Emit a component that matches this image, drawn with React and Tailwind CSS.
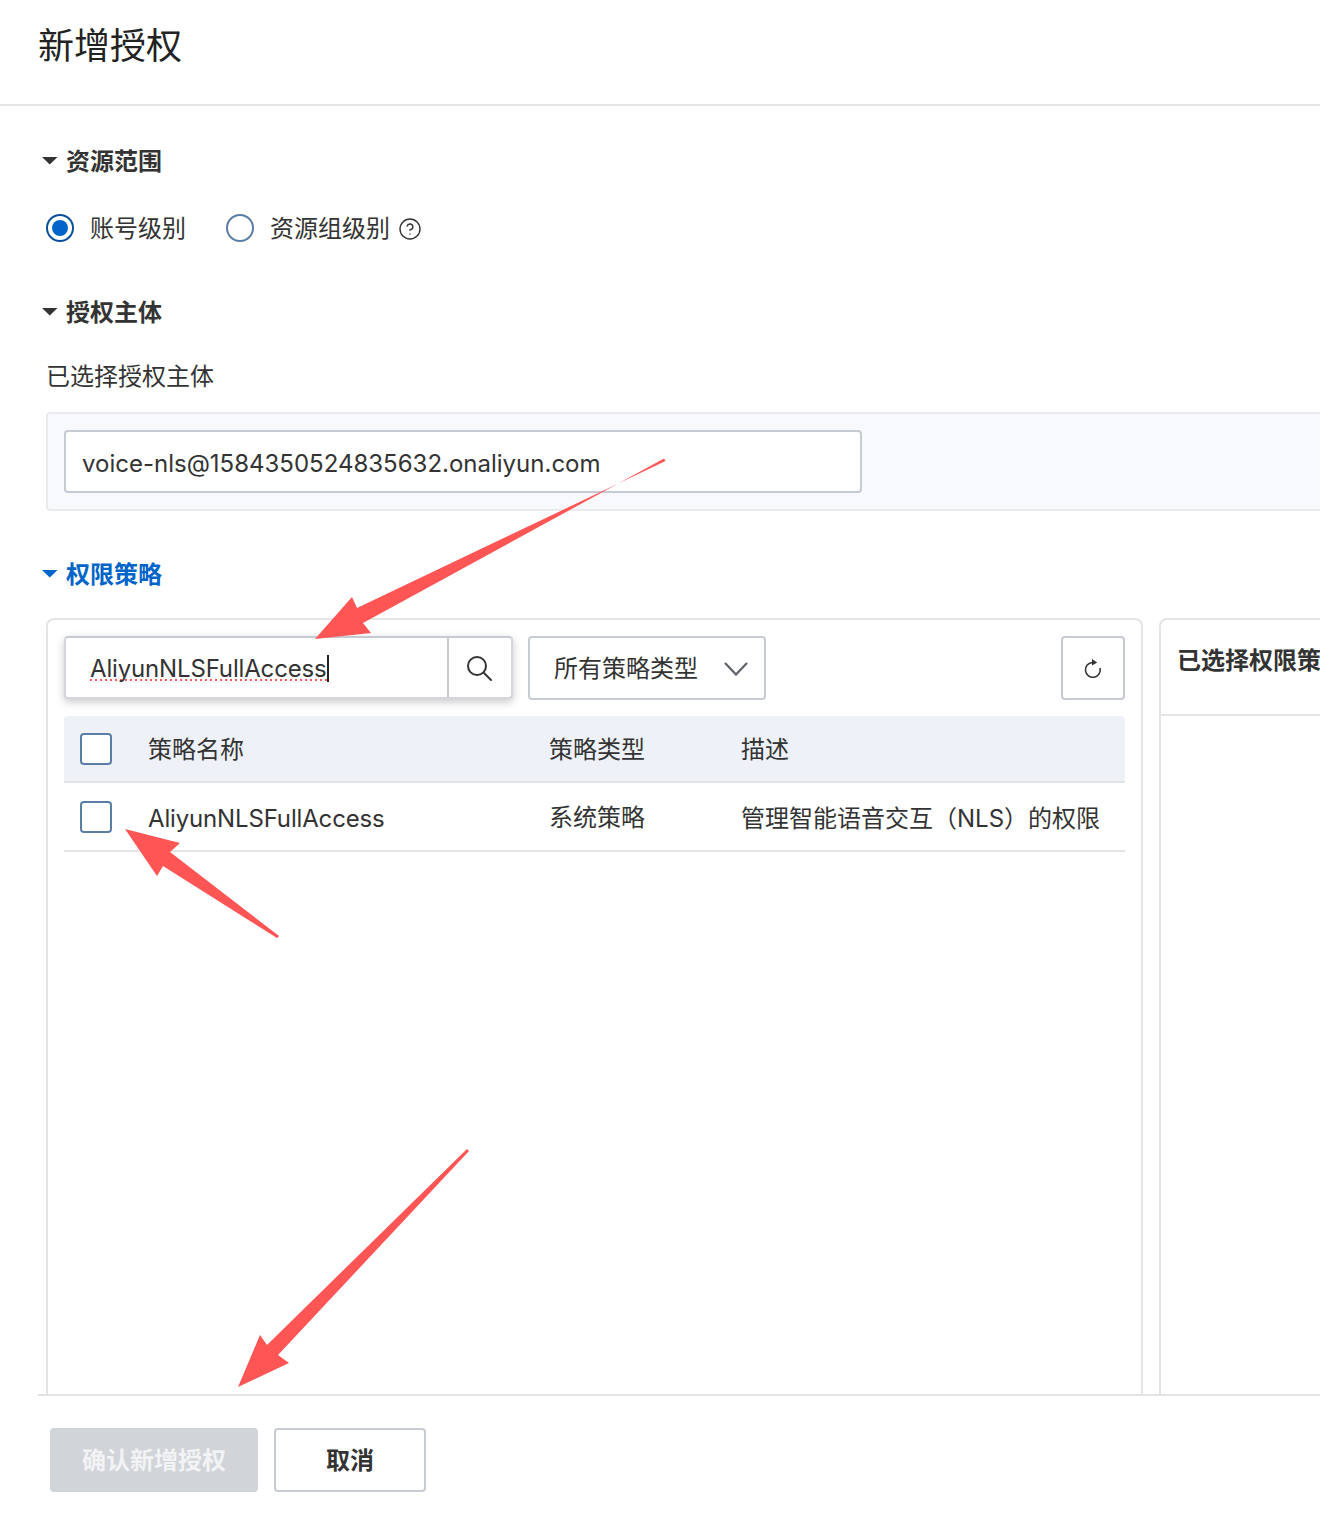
import React from "react";
import { CircleHelp } from "lucide-react";

const font = { fontFamily: '"Inter","Noto Sans CJK SC","Liberation Sans",sans-serif' };

function Caret({ blue }) {
  return (
    <svg width="16" height="8" viewBox="0 0 16 8" className="shrink-0">
      <polygon points="0,0 15.5,0 7.75,7.5" fill={blue ? "#0064c8" : "#333333"} />
    </svg>
  );
}

function SectionTitle({ children, blue }) {
  return (
    <div className={"flex h-[34px] items-center gap-[8px] -ml-[4px] text-[24px] leading-[34px] font-bold " + (blue ? "text-[#0064c8]" : "text-[#333333]")}>
      <Caret blue={blue} />
      <span className="mt-[2px]">{children}</span>
    </div>
  );
}

function Checkbox() {
  return <div className="h-[32px] w-[32px] shrink-0 rounded-[4px] border-2 border-[#5a7fa6] bg-white" />;
}

export default function App() {
  return (
    <div style={font} className="relative h-[1518px] w-[1320px] overflow-hidden bg-white text-[#333333]">
      <header className="flex h-[106px] items-start border-b-2 border-[#e3e4e6] pl-[38px] pt-[20px]">
        <h1 className="text-[36px] leading-[52px] font-normal text-[#222222]">新增授权</h1>
      </header>

      <main className="h-[1288px] overflow-hidden pl-[46px] pt-[38px]">
        <SectionTitle>资源范围</SectionTitle>

        <div className="mt-[36px] flex h-[28px] items-center text-[24px]">
          <div className="flex h-[28px] w-[28px] items-center justify-center rounded-full border-2 border-[#0a4f99]">
            <div className="h-[16px] w-[16px] rounded-full bg-[#0064c8]" />
          </div>
          <span className="ml-[16px] mt-[2px]">账号级别</span>
          <div className="ml-[40px] h-[28px] w-[28px] rounded-full border-2 border-[#5a7fa6]" />
          <span className="ml-[16px] mt-[2px]">资源组级别</span>
          <CircleHelp className="ml-[8px] mt-[1px]" size={24} strokeWidth={1.4} color="#333333" />
        </div>

        <div className="mt-[53px]">
          <SectionTitle>授权主体</SectionTitle>
        </div>

        <div className="mt-[31px] mb-[-1px] text-[24px] leading-[34px]">已选择授权主体</div>

        <div className="mt-[19px] h-[99px] w-[1320px] rounded-[4px] border-2 border-[#e8eaee] bg-[#f7f9fc] pl-[16px] pt-[16px]">
          <div className="flex h-[63px] w-[798px] items-center rounded-[4px] border-2 border-[#c5cad3] bg-white pl-[16px] text-[24px]">
            <span className="mt-[4px]">voice-nls@1584350524835632.onaliyun.com</span>
          </div>
        </div>

        <div className="mt-[46px]">
          <SectionTitle blue>权限策略</SectionTitle>
        </div>

        <div className="mt-[27px] flex w-[1320px] gap-[16px]">
          <section className="h-[800px] w-[1097px] shrink-0 rounded-t-[8px] border-2 border-[#e3e4e6] px-[16px] pt-[16px]">
            <div className="flex h-[64px] items-start">
              <div className="flex h-[63px] w-[449px] rounded-[4px] border-2 border-[#d3d6dc] border-t-[#c5cad3] bg-white shadow-[0_3px_8px_rgba(0,0,0,0.22)]">
                <div className="flex flex-1 items-center pl-[24px] text-[24px]">
                  <span className="mt-[2px] inline-block h-[27px] border-r-2 border-[#222222] bg-[linear-gradient(to_right,#ff5a5a_50%,transparent_50%)] bg-[length:5px_2px] bg-[position:0_24px] bg-repeat-x leading-[27px] tracking-[-0.16px]">
                    AliyunNLSFullAccess
                  </span>
                </div>
                <div className="flex w-[64px] items-center justify-center border-l-2 border-[#c5cad3]">
                  <svg width="28" height="28" viewBox="0 0 28 28" fill="none" stroke="#333333" strokeWidth="2" strokeLinecap="round">
                    <circle cx="11" cy="12" r="9" />
                    <path d="M18 19 L25 26" />
                  </svg>
                </div>
              </div>
              <div className="ml-[15px] flex h-[64px] w-[238px] items-center justify-between rounded-[4px] border-2 border-[#c5cad3] pl-[24px] pr-[16px] text-[24px]">
                <span className="mt-[2px]">所有策略类型</span>
                <svg width="24" height="15" viewBox="0 0 24 15" fill="none" stroke="#5c6068" strokeWidth="2.2">
                  <path d="M1 2 L12 13.5 L23 2" />
                </svg>
              </div>
              <div className="ml-auto flex h-[64px] w-[64px] items-center justify-center rounded-[4px] border-2 border-[#c5cad3]">
                <svg width="20" height="22" viewBox="0 0 20 22" fill="none" stroke="#333333" strokeWidth="1.6" className="mt-[1px]">
                  <path d="M9.5 4.5 A7.4 7.4 0 1 0 17 10" />
                  <path d="M9 1 L14.2 4.4 L9 7.6 Z" fill="#333333" stroke="none" />
                </svg>
              </div>
            </div>

            <div className="mt-[16px] flex h-[67px] items-center rounded-t-[4px] border-b-2 border-[#e3e4e6] bg-[#eef1f8] pl-[16px] text-[24px]">
              <Checkbox />
              <span className="ml-[36px] mt-[2px] w-[401px]">策略名称</span>
              <span className="mt-[2px] w-[192px]">策略类型</span>
              <span className="mt-[2px]">描述</span>
            </div>
            <div className="flex h-[69px] items-center border-b-2 border-[#e3e4e6] pl-[16px] text-[24px]">
              <Checkbox />
              <span className="ml-[36px] mt-[4px] w-[401px] tracking-[-0.16px]">AliyunNLSFullAccess</span>
              <span className="mt-[2px] w-[192px]">系统策略</span>
              <span className="mt-[4px]">管理智能语音交互（NLS）的权限</span>
            </div>
          </section>

          <section className="h-[800px] w-[400px] shrink-0 rounded-t-[8px] border-2 border-[#e3e4e6]">
            <div className="flex h-[96px] items-start border-b-2 border-[#e3e4e6] pl-[16px] pt-[20px] text-[24px] leading-[42px] font-bold">
              已选择权限策略
            </div>
          </section>
        </div>
      </main>

      <footer className="ml-[38px] flex h-[124px] items-start gap-[16px] border-t-2 border-[#e3e4e6] pl-[12px] pt-[32px] text-[24px] font-bold">
        <button className="h-[64px] w-[208px] rounded-[4px] bg-[#d1d4d9] pt-[2px] text-[#f2f3f5]">确认新增授权</button>
        <button className="h-[64px] w-[152px] rounded-[4px] border-2 border-[#c5cad3] bg-white pt-[2px] text-[#333333]">取消</button>
      </footer>

      <svg className="pointer-events-none absolute left-0 top-0" width="1320" height="1518" viewBox="0 0 1320 1518">
        <polygon fill="#ff5555" points="664,458.5 665.5,461 357,608 352,597 315,639 371,633 363,623" />
        <polygon fill="#ff5555" points="279,936 277,938 163,866 157,876 125,829 180,843 170,852" />
        <polygon fill="#ff5555" points="467,1149 469,1151 278,1355 289,1363 238,1387 260,1335 267,1345" />
      </svg>
    </div>
  );
}
